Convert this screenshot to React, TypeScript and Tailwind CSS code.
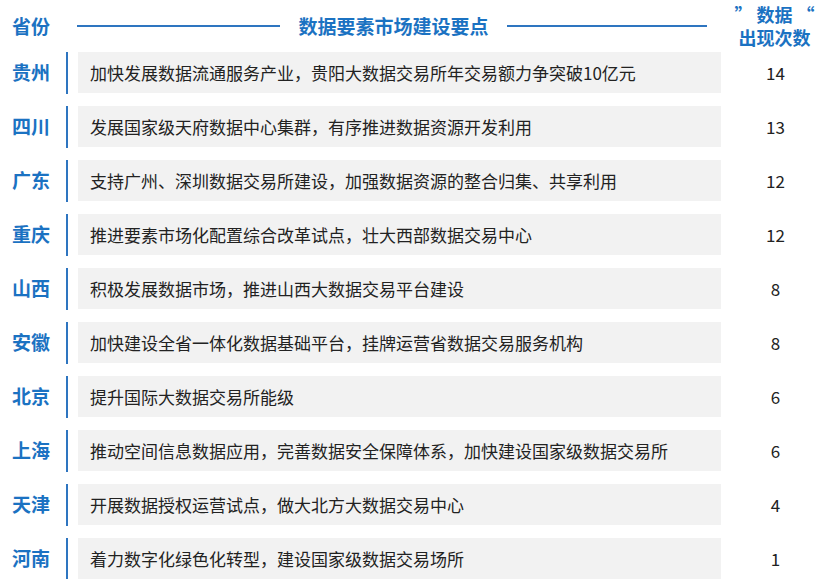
const rows: [string, string, string][] = [
  ["贵州", "加快发展数据流通服务产业，贵阳大数据交易所年交易额力争突破10亿元", "14"],
  ["四川", "发展国家级天府数据中心集群，有序推进数据资源开发利用", "13"],
  ["广东", "支持广州、深圳数据交易所建设，加强数据资源的整合归集、共享利用", "12"],
  ["重庆", "推进要素市场化配置综合改革试点，壮大西部数据交易中心", "12"],
  ["山西", "积极发展数据市场，推进山西大数据交易平台建设", "8"],
  ["安徽", "加快建设全省一体化数据基础平台，挂牌运营省数据交易服务机构", "8"],
  ["北京", "提升国际大数据交易所能级", "6"],
  ["上海", "推动空间信息数据应用，完善数据安全保障体系，加快建设国家级数据交易所", "6"],
  ["天津", "开展数据授权运营试点，做大北方大数据交易中心", "4"],
  ["河南", "着力数字化绿色化转型，建设国家级数据交易场所", "1"],
];

export default function App() {
  return (
    <div className="w-[830px] h-[579px] bg-white overflow-hidden" style={{ fontFamily: '"Microsoft YaHei","Noto Sans CJK SC",sans-serif' }}>
      <div className="flex items-center h-[52px]">
        <div className="w-[67px] pl-[12px] text-[19px] font-bold text-[#1b72c2]">省份</div>
        <div className="ml-[10px] w-[203px] h-[2px] bg-[#2e75c0]" />
        <div className="w-[227px] text-center text-[19px] font-bold text-[#1b72c2]">数据要素市场建设要点</div>
        <div className="w-[200px] h-[2px] bg-[#2e75c0]" />
        <div className="flex-1 text-center text-[18px] font-bold text-[#1b72c2] leading-[23px] pl-[12px]">
          <div>” 数据 “</div>
          <div>出现次数</div>
        </div>
      </div>
      <div className="flex flex-col gap-[13px]">
        {rows.map(([p, t, n]) => (
          <div key={p} className="flex items-center h-[41px]">
            <div className="w-[66px] pl-[12px] text-[19px] font-bold text-[#1b72c2]">{p}</div>
            <div className="w-[2px] h-[42px] bg-[#2e75c0]" />
            <div className="ml-[10px] w-[643px] h-[41px] bg-[#f2f2f2] flex items-center pl-[12px] text-[17px] text-[#222]">{t}</div>
            <div className="flex-1 text-center text-[17px] text-[#222]">{n}</div>
          </div>
        ))}
      </div>
    </div>
  );
}
